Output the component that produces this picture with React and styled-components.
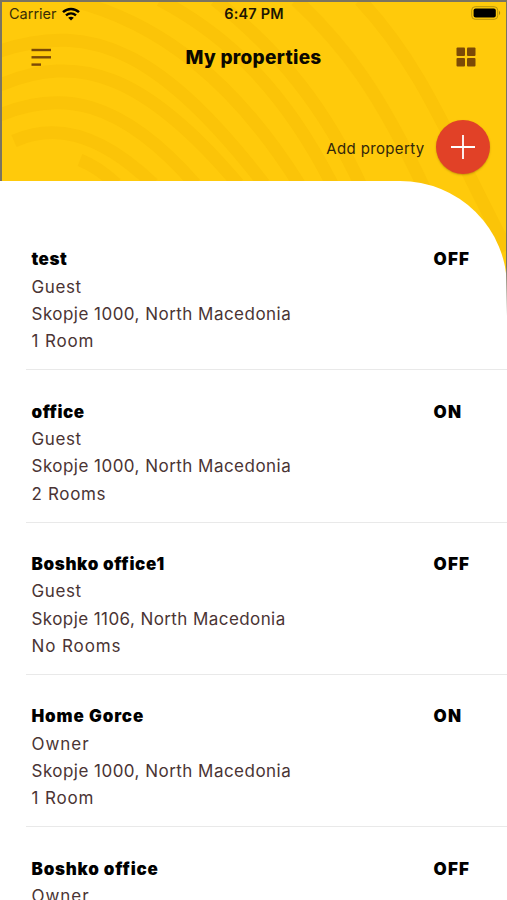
import React from "react";
import styled, { createGlobalStyle } from "styled-components";

const properties = [
  {
    name: "test",
    role: "Guest",
    address: "Skopje 1000, North Macedonia",
    rooms: "1 Room",
    status: "OFF",
  },
  {
    name: "office",
    role: "Guest",
    address: "Skopje 1000, North Macedonia",
    rooms: "2 Rooms",
    status: "ON",
  },
  {
    name: "Boshko office1",
    role: "Guest",
    address: "Skopje 1106, North Macedonia",
    rooms: "No Rooms",
    status: "OFF",
  },
  {
    name: "Home Gorce",
    role: "Owner",
    address: "Skopje 1000, North Macedonia",
    rooms: "1 Room",
    status: "ON",
  },
  {
    name: "Boshko office",
    role: "Owner",
    address: "Skopje 1000, North Macedonia",
    rooms: "1 Room",
    status: "OFF",
  },
];

// letter spacing in px for each label
const tracking = {
  "6:47 PM": 0.15,
  "My properties": 0.3,
  "Add property": 0.35,
  test: 0.5,
  office: 0.5,
  "Boshko office1": 0.65,
  "Home Gorce": 0.87,
  "Boshko office": 0.77,
  Guest: 0.6,
  Owner: 0.95,
  "Skopje 1000, North Macedonia": 0.47,
  "Skopje 1106, North Macedonia": 0.42,
  "1 Room": 0.85,
  "2 Rooms": 0.65,
  "No Rooms": 0.9,
  OFF: 1.2,
  ON: 1.2,
};

const Label = ({ as: Text, children }) => (
  <Text $spacing={tracking[children] || 0}>{children}</Text>
);

const Rings = () => (
  <RingsSvg viewBox="0 0 507 320" fill="none" stroke="#fbc408" strokeWidth="13">
    <path d="M80 160Q98 167 116 184" />
    <path d="M14 141C50 125 95 128 153 184" />
    <path d="M0 115C60 90 120 98 195 184" />
    <path d="M0 85C78 52 145 74 238 184" />
    <path d="M0 51C94 19 165 56 264 184" />
    <path d="M70 0C160 22 235 82 299 184" />
    <path d="M160 0C230 37 285 92 332 184" />
    <path d="M215 0C280 52 325 107 363 190" />
    <path d="M296 0C345 46 380 93 425 190" />
    <path d="M360 0C420 64 445 130 507 250" />
  </RingsSvg>
);

const App = () => {
  return (
    <Screen>
      <GlobalStyle />
      <Header>
        <Rings />
        <StatusBar>
          <Carrier>
            <Label as={CarrierName}>Carrier</Label>
            <svg width="18" height="14" viewBox="0 0 18 14" fill="none" stroke="#000">
              <path d="M1 5.2C5.5.9 12.5.9 17 5.2" strokeWidth="2.5" />
              <path d="M4 8.4C7 5.7 11 5.7 14 8.4" strokeWidth="2.4" />
              <path d="M9 13.5L6.2 10.7Q9 8.7 11.8 10.7Z" fill="#000" stroke="none" />
            </svg>
          </Carrier>
          <Label as={Clock}>6:47 PM</Label>
          <Battery>
            <svg width="30" height="14" viewBox="0 0 30 14">
              <rect x=".7" y=".7" width="26" height="12.6" rx="3.5" fill="none" stroke="#b8940a" />
              <rect x="2.6" y="2.5" width="22.2" height="9" rx="2" fill="#000" />
              <path d="M28 4.8Q30.4 7 28 9.2Z" fill="#a68508" />
            </svg>
          </Battery>
        </StatusBar>
        <NavBar>
          <svg width="20" height="20" viewBox="0 0 20 20" fill="#7c4a06">
            <rect x=".5" y="1.8" width="19.5" height="2.4" />
            <rect x=".5" y="9.1" width="19.5" height="2.4" />
            <rect x=".5" y="16.4" width="9.5" height="2.4" />
          </svg>
          <Label as={Title}>My properties</Label>
          <svg width="20" height="20" viewBox="0 0 20 20" fill="#7c4a06">
            <rect x=".5" y=".5" width="8.5" height="8.5" rx="1" />
            <rect x="11" y=".5" width="8.5" height="8.5" rx="1" />
            <rect x=".5" y="11" width="8.5" height="8.5" rx="1" />
            <rect x="11" y="11" width="8.5" height="8.5" rx="1" />
          </svg>
        </NavBar>
        <AddRow>
          <Label as={AddText}>Add property</Label>
          <AddButton aria-label="Add property">
            <svg width="26" height="26" viewBox="0 0 26 26" stroke="#fff" strokeWidth="1.8">
              <path d="M13 1v24M1 13h24" />
            </svg>
          </AddButton>
        </AddRow>
      </Header>
      <Panel>
        {properties.map((item) => (
          <Property key={item.name}>
            <div>
              <Label as={Name}>{item.name}</Label>
              <Label as={Detail}>{item.role}</Label>
              <Label as={Detail}>{item.address}</Label>
              <Label as={Detail}>{item.rooms}</Label>
            </div>
            <Label as={Status}>{item.status}</Label>
          </Property>
        ))}
      </Panel>
    </Screen>
  );
};

export default App;

const GlobalStyle = createGlobalStyle`
  * {
    box-sizing: border-box;
  }

  body {
    margin: 0;
    overflow: hidden;
    font-family: "Inter", sans-serif;
  }
`;

const Screen = styled.div`
  width: 507px;
  height: 900px;
  overflow: hidden;
  background-color: #fff;
`;

const Header = styled.header`
  position: relative;
  height: 320px;
  margin-bottom: -139px;
  background-color: #ffca0b;

  /* thin frame along the top and the sides */
  &::after {
    content: "";
    position: absolute;
    inset: 0;
    border: solid #7b7460;
    border-width: 2px 1px 0 2px;
  }
`;

const RingsSvg = styled.svg`
  position: absolute;
  inset: 0;
  width: 507px;
  height: 320px;
`;

const StatusBar = styled.div`
  position: relative;
  display: grid;
  grid-template-columns: 1fr auto 1fr;
  align-items: center;
  height: 27px;
  padding: 0 8px 0 9px;
`;

const Carrier = styled.div`
  display: flex;
  align-items: center;
  gap: 5px;
`;

const CarrierName = styled.span`
  font-size: 14.5px;
  letter-spacing: ${(p) => p.$spacing}px;
  color: #3a2e05;
`;

const Clock = styled.span`
  font-size: 14.5px;
  font-weight: 600;
  letter-spacing: ${(p) => p.$spacing}px;
  color: #1c1602;
`;

const Battery = styled.div`
  display: flex;
  justify-content: flex-end;
  margin: -1px -2px 0 0;
`;

const NavBar = styled.nav`
  position: relative;
  display: flex;
  align-items: center;
  justify-content: space-between;
  height: 60px;
  padding: 0 31px;
`;

const Title = styled.h1`
  margin: 0;
  padding-top: 1px;
  font-size: 19px;
  font-weight: 800;
  letter-spacing: ${(p) => p.$spacing}px;
  color: #0a0800;
`;

const AddRow = styled.div`
  position: relative;
  display: flex;
  align-items: center;
  justify-content: flex-end;
  gap: 11px;
  height: 54px;
  margin-top: 33px;
  padding-right: 17.5px;
`;

const AddText = styled.span`
  padding-top: 3px;
  font-size: 15px;
  letter-spacing: ${(p) => p.$spacing}px;
  color: #33270a;
`;

const AddButton = styled.button`
  display: flex;
  align-items: center;
  justify-content: center;
  width: 54px;
  height: 54px;
  padding: 0;
  border: 0;
  border-radius: 50%;
  background-color: #e14127;
  box-shadow: 0 1px 2px rgba(120, 80, 0, 0.4);
`;

const Panel = styled.main`
  position: relative;
  height: 719px;
  padding: 37px 0 0 26px;
  border-top-right-radius: 107px 106px;
  background-color: #fff;

  /* the frame fades out below the rounded corner */
  &::after {
    content: "";
    position: absolute;
    top: 85px;
    right: 0;
    width: 1px;
    height: 50px;
    background: linear-gradient(#7b7460, #fff);
  }
`;

const Property = styled.section`
  display: grid;
  grid-template-columns: 402px auto;
  height: 152.33px;
  padding: 28.4px 0 0 5.5px;
  border-bottom: 1px solid #e9e9e9;
`;

const Name = styled.h2`
  margin: 0;
  font-size: 17px;
  font-weight: 900;
  line-height: 27.33px;
  letter-spacing: ${(p) => p.$spacing}px;
  color: #000;
`;

const Detail = styled.p`
  margin: 0;
  font-size: 17px;
  line-height: 27.33px;
  letter-spacing: ${(p) => p.$spacing}px;
  color: #4a3434;
`;

const Status = styled(Name).attrs({ as: "span" })``;
